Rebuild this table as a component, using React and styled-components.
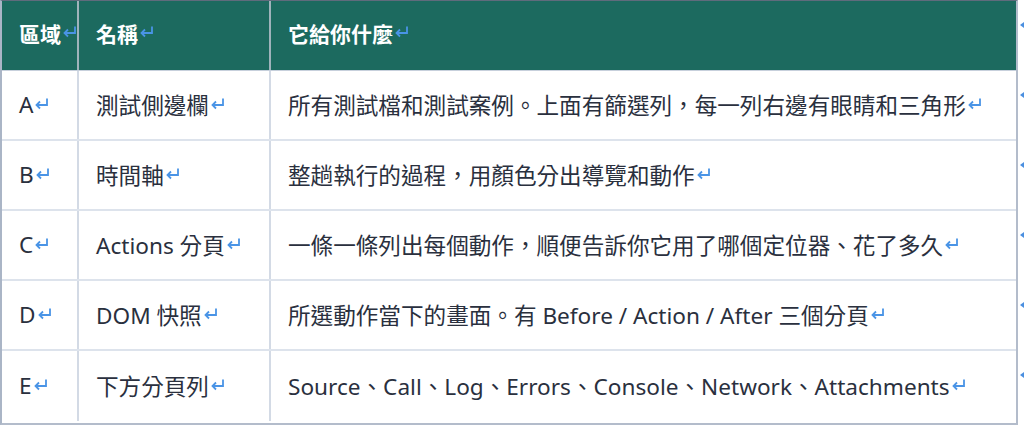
import React from "react";
import styled, { createGlobalStyle } from "styled-components";

const GlobalStyle = createGlobalStyle`
  html, body {
    margin: 0;
    padding: 0;
    background: #ffffff;
  }
  body {
    font-family: "Noto Sans", "Noto Sans CJK TC", sans-serif;
  }
`;

const Page = styled.div`
  display: flex;
  flex-direction: row;
  width: 1024px;
  height: 425px;
  overflow: hidden;
`;

const Table = styled.div`
  width: 1016px;
  border-top: 1px solid #5f6b7c;
  border-left: 2px solid #aab5c6;
  border-right: 2px solid #b3bccb;
  border-bottom: 2px solid #b3bccb;
`;

const Row = styled.div`
  display: grid;
  grid-template-columns: 77px 192px 1fr;
  height: 70px;
  background: ${p => (p.head ? "#1c6a5f" : "#ffffff")};
  border-bottom: ${p => (p.last ? "none" : p.head ? "1px solid #c7d0dc" : "2px solid #dde3ec")};
  box-sizing: border-box;
`;

const Cell = styled.div`
  display: flex;
  align-items: center;
  padding-left: 17px;
  padding-bottom: ${p => (p.head ? 6 : 2)}px;
  border-right: ${p => (p.end ? "none" : p.head ? "2px solid #9fb3bb" : "2px solid #d3dae5")};
  color: ${p => (p.head ? "#ffffff" : "#2a303e")};
  font-size: ${p => (p.head ? 21 : 22.6)}px;
  font-weight: ${p => (p.head ? 700 : 400)};
  white-space: nowrap;
`;

const Markers = styled.div`
  display: flex;
  flex-direction: column;
  padding-top: 22px;
  margin-left: 2px;
`;

const Marker = styled.div`
  width: 0;
  height: 0;
  margin-bottom: 64px;
  border-top: 3px solid transparent;
  border-bottom: 3px solid transparent;
  border-right: 4px solid #4a8fe0;
`;

const ReturnMark = styled.svg`
  width: 15px;
  height: 13px;
  margin-left: 1px;
  margin-bottom: 2px;
  flex: none;
`;

const Ret = () => (
  <ReturnMark viewBox="0 0 15 13">
    <path d="M13 1.5 V8 H2.5" fill="none" stroke="#4a94e6" strokeWidth="1.8" />
    <path d="M6 4.5 L2.5 8 L6 11.5" fill="none" stroke="#4a94e6" strokeWidth="1.8" />
  </ReturnMark>
);

const rows = [
  ["A", "測試側邊欄", "所有測試檔和測試案例。上面有篩選列，每一列右邊有眼睛和三角形"],
  ["B", "時間軸", "整趟執行的過程，用顏色分出導覽和動作"],
  ["C", "Actions 分頁", "一條一條列出每個動作，順便告訴你它用了哪個定位器、花了多久"],
  ["D", "DOM 快照", "所選動作當下的畫面。有 Before / Action / After 三個分頁"],
  ["E", "下方分頁列", "Source、Call、Log、Errors、Console、Network、Attachments"],
];

export default function App() {
  return (
    <Page>
      <GlobalStyle />
      <Table>
        <Row head>
          <Cell head>區域<Ret /></Cell>
          <Cell head>名稱<Ret /></Cell>
          <Cell head end>它給你什麼<Ret /></Cell>
        </Row>
        {rows.map((r, i) => (
          <Row key={r[0]} last={i === rows.length - 1}>
            <Cell>{r[0]}<Ret /></Cell>
            <Cell>{r[1]}<Ret /></Cell>
            <Cell end>{r[2]}<Ret /></Cell>
          </Row>
        ))}
      </Table>
      <Markers>
        {[0, 1, 2, 3, 4, 5].map(i => (
          <Marker key={i} />
        ))}
      </Markers>
    </Page>
  );
}
